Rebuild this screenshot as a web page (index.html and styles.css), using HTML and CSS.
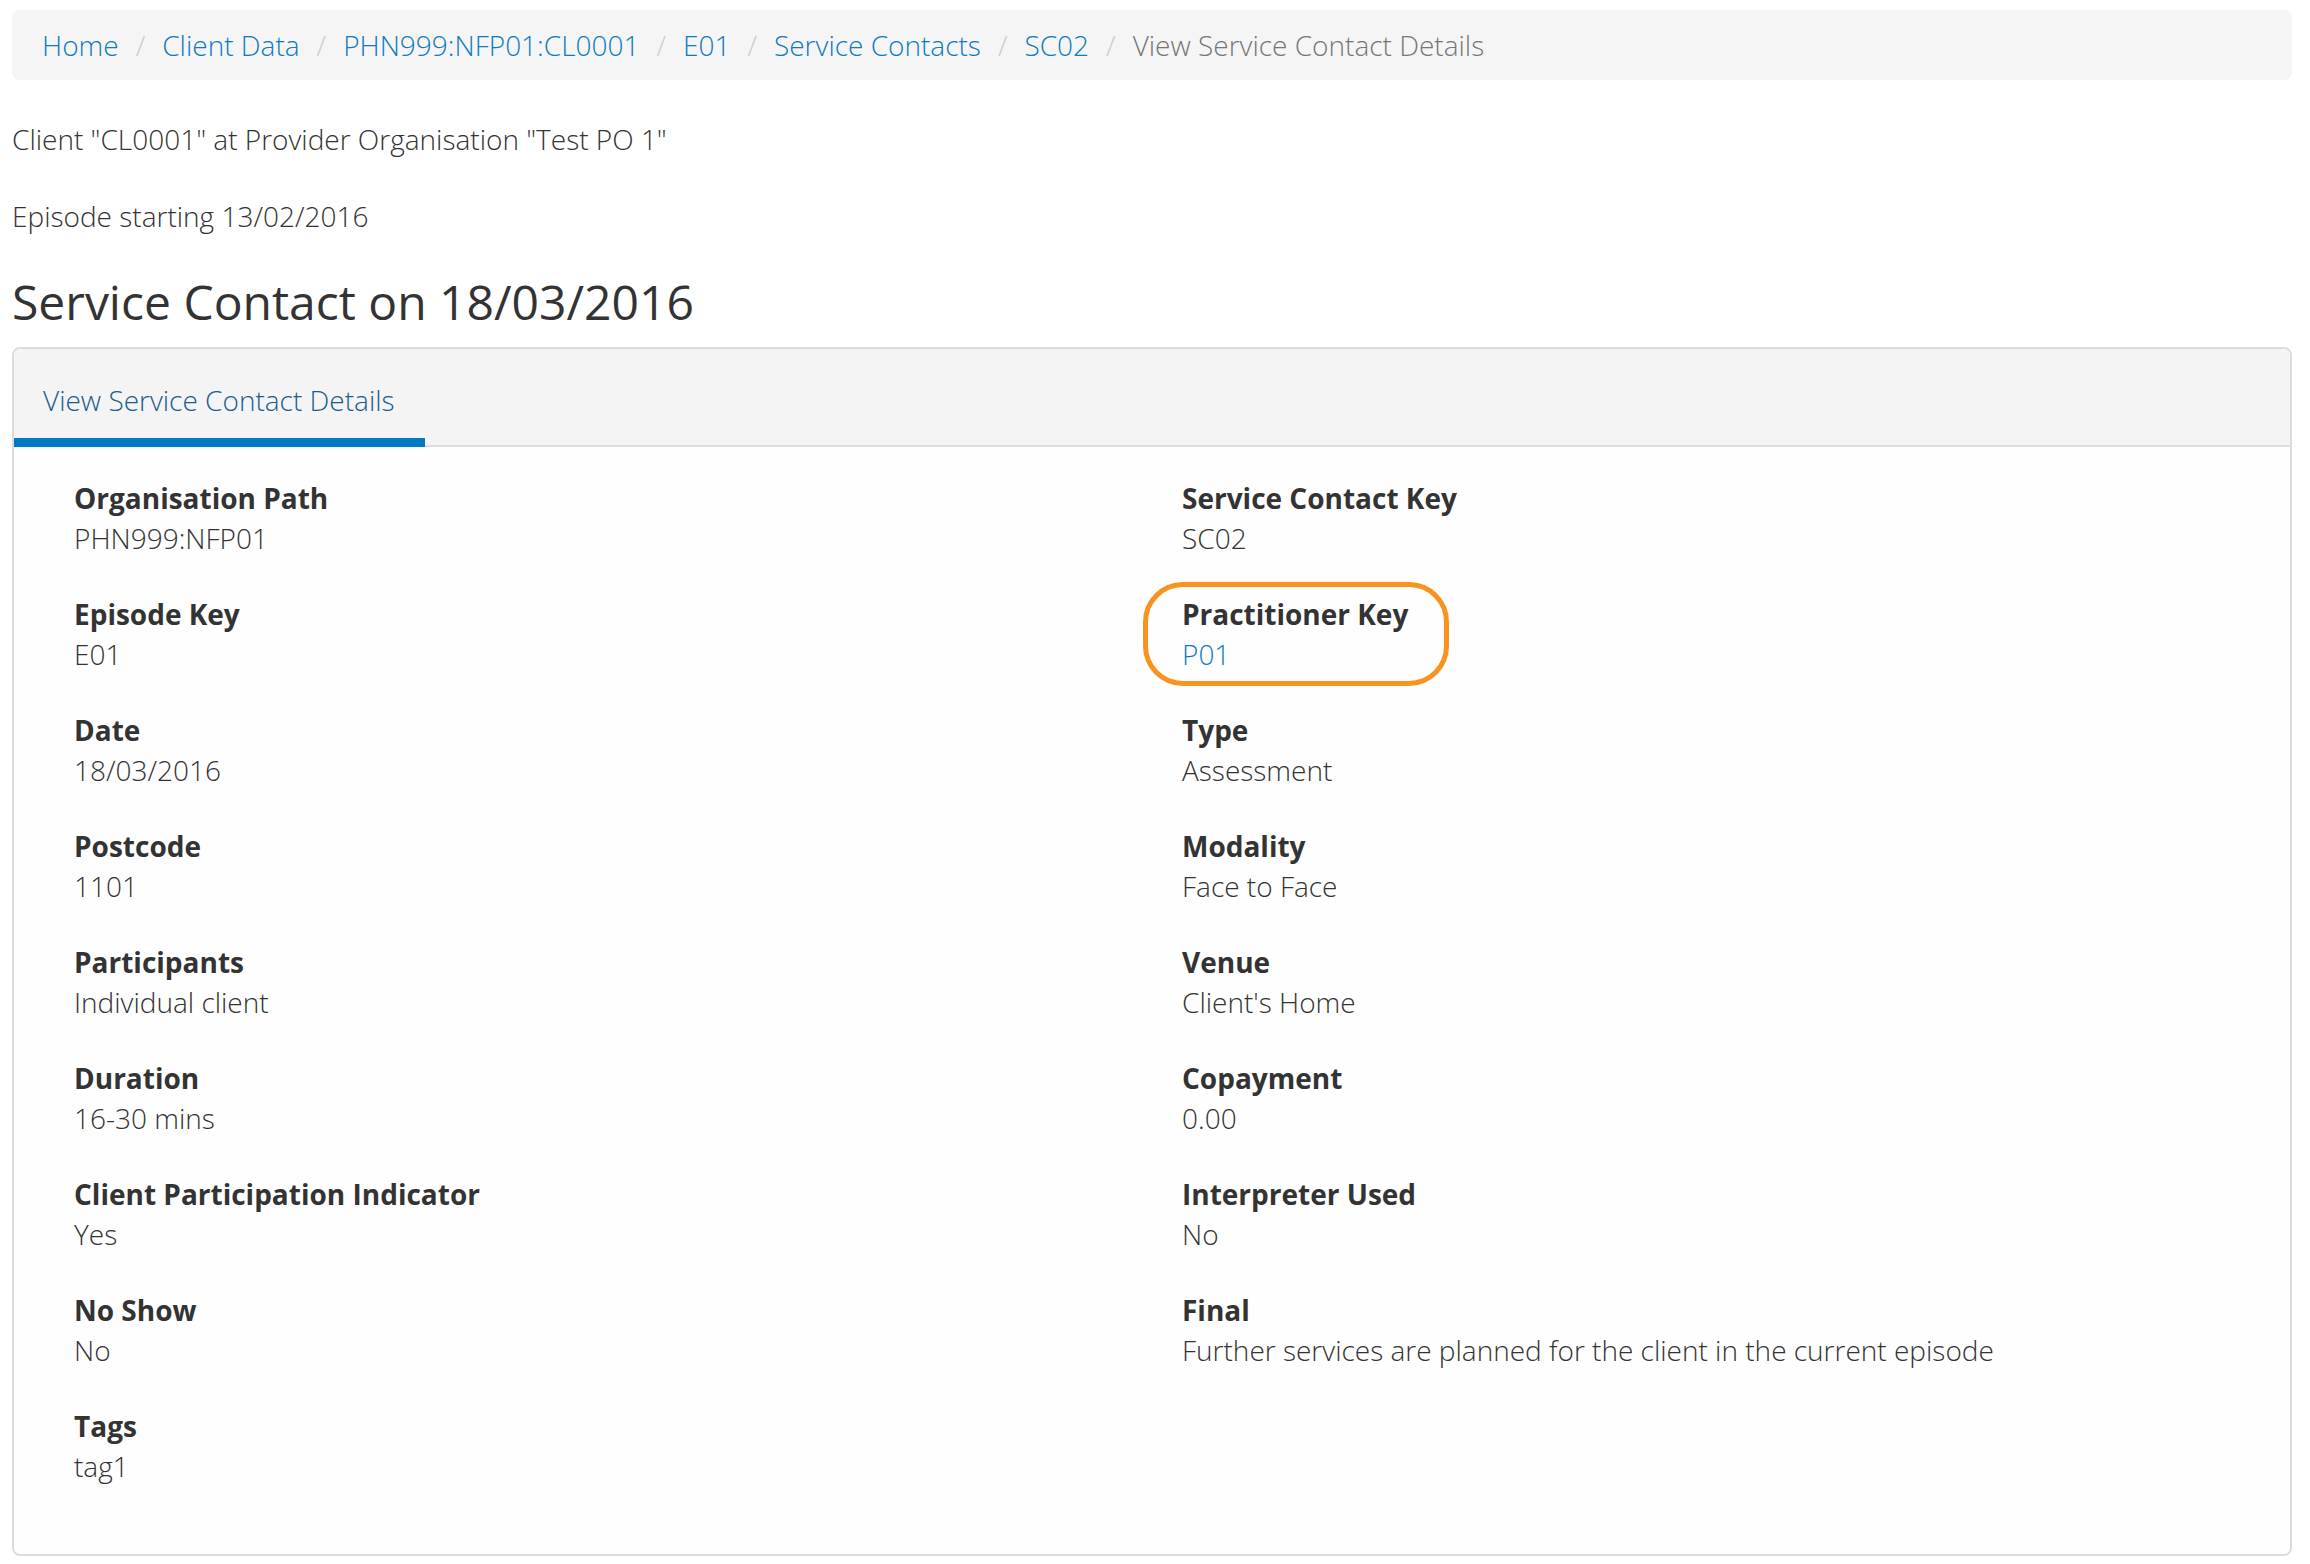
FILE: index.html
```html
<!DOCTYPE html>
<html lang="en">
<head>
<meta charset="utf-8">
<title>View Service Contact Details</title>
<link rel="stylesheet" href="styles.css">
</head>
<body>
<div class="page">
  <ol class="breadcrumb">
    <li><a href="#">Home</a></li>
    <li><a href="#">Client Data</a></li>
    <li><a href="#">PHN999:NFP01:CL0001</a></li>
    <li><a href="#">E01</a></li>
    <li><a href="#">Service Contacts</a></li>
    <li><a href="#">SC02</a></li>
    <li class="active">View Service Contact Details</li>
  </ol>

  <p class="info">Client "CL0001" at Provider Organisation "Test PO 1"</p>
  <p class="info">Episode starting 13/02/2016</p>

  <h3 class="title">Service Contact on 18/03/2016</h3>

  <div class="panel">
    <div class="tabs">
      <a class="tab active" href="#">View Service Contact Details</a>
    </div>
    <div class="panel-body">
      <dl class="fields">
        <div class="field"><dt>Organisation Path</dt><dd>PHN999:NFP01</dd></div>
        <div class="field"><dt>Service Contact Key</dt><dd>SC02</dd></div>
        <div class="field"><dt>Episode Key</dt><dd>E01</dd></div>
        <div class="field highlighted"><dt>Practitioner Key</dt><dd><a href="#">P01</a></dd><span class="ring"></span></div>
        <div class="field"><dt>Date</dt><dd>18/03/2016</dd></div>
        <div class="field"><dt>Type</dt><dd>Assessment</dd></div>
        <div class="field"><dt>Postcode</dt><dd>1101</dd></div>
        <div class="field"><dt>Modality</dt><dd>Face to Face</dd></div>
        <div class="field"><dt>Participants</dt><dd>Individual client</dd></div>
        <div class="field"><dt>Venue</dt><dd>Client's Home</dd></div>
        <div class="field"><dt>Duration</dt><dd>16-30 mins</dd></div>
        <div class="field"><dt>Copayment</dt><dd>0.00</dd></div>
        <div class="field"><dt>Client Participation Indicator</dt><dd>Yes</dd></div>
        <div class="field"><dt>Interpreter Used</dt><dd>No</dd></div>
        <div class="field"><dt>No Show</dt><dd>No</dd></div>
        <div class="field"><dt>Final</dt><dd>Further services are planned for the client in the current episode</dd></div>
        <div class="field"><dt>Tags</dt><dd>tag1</dd></div>
      </dl>
    </div>
  </div>
</div>
</body>
</html>
```

FILE: styles.css
```css
* {
  box-sizing: border-box;
}

html, body {
  margin: 0;
  padding: 0;
  background: #ffffff;
}

body {
  font-family: "Open Sans", "Noto Sans", sans-serif;
  font-weight: 300;
  font-size: 28px;
  line-height: 40px;
  color: #333333;
}

a {
  color: #0f7bc2;
  text-decoration: none;
}

.page {
  padding: 10px 18px 0 12px;
}

.breadcrumb {
  display: flex;
  flex-wrap: wrap;
  list-style: none;
  margin: 0 0 39px 0;
  padding: 15px 30px;
  background: #f5f5f5;
  border-radius: 8px;
}

.breadcrumb li + li::before {
  content: "/";
  color: #cccccc;
  padding: 0 17px;
}

.breadcrumb .active {
  color: #777777;
}

.info {
  margin: 0 0 37px 0;
}

.title {
  font-size: 48px;
  font-weight: 400;
  line-height: 52.8px;
  margin: 40px 0 18px 0;
  color: #333333;
}

.panel {
  border: 2px solid #dcdcdc;
  border-radius: 8px;
  background: #fefefe;
  overflow: hidden;
}

.tabs {
  display: flex;
  background: #f4f4f4;
  border-bottom: 2px solid #dddddd;
}

.tab {
  display: block;
  padding: 31px 30px 18px 29px;
  color: #1d5d8e;
  border-bottom: 9px solid #007ac0;
  margin-bottom: -2px;
}

.panel-body {
  padding: 31px 30px 68px 30px;
}

.fields {
  display: grid;
  grid-template-columns: 1fr 1fr;
  column-gap: 60px;
  row-gap: 36px;
  margin: 0;
  padding: 0 30px;
}

.field {
  position: relative;
}

.field dt {
  font-weight: 700;
  margin: 0;
}

.field dd {
  margin: 0;
}

.ring {
  position: absolute;
  left: -39px;
  top: -12px;
  width: 306px;
  height: 104px;
  border: 5px solid #f7931e;
  border-radius: 40px;
  pointer-events: none;
}
```
